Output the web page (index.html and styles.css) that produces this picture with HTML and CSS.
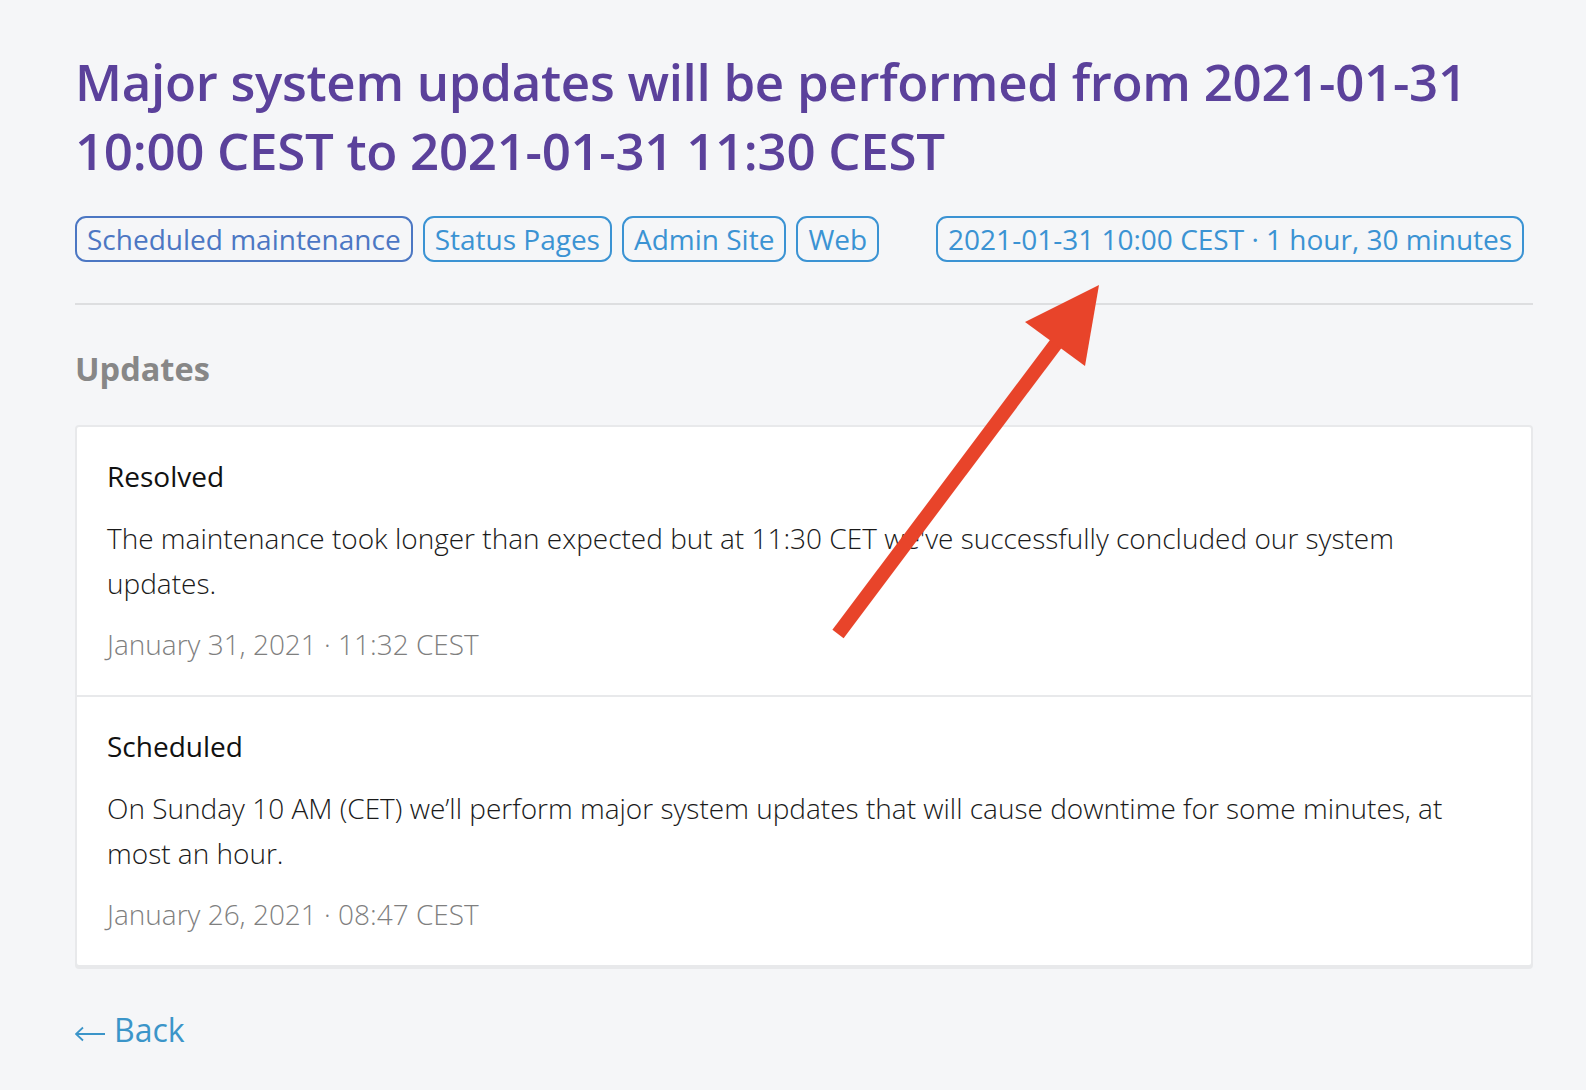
FILE: index.html
```html
<!DOCTYPE html>
<html lang="en">
<head>
    <meta charset="UTF-8">
    <meta name="viewport" content="width=device-width, initial-scale=1">
    <title>Major system updates</title>
    <link rel="stylesheet" href="styles.css">
</head>
<body>
<div class="page">
    <h1 class="title">Major system updates will be performed from 2021-01-31 10:00 CEST to 2021-01-31 11:30 CEST</h1>

    <div class="tags">
        <span class="tag tag-kind">Scheduled maintenance</span>
        <span class="tag">Status Pages</span>
        <span class="tag">Admin Site</span>
        <span class="tag">Web</span>
        <span class="tag tag-when">2021-01-31 10:00 CEST · 1 hour, 30 minutes</span>
    </div>

    <hr class="divider">

    <h2 class="section-title">Updates</h2>

    <div class="updates">
        <div class="update">
            <div class="update-status">Resolved</div>
            <p class="update-text">The maintenance took longer than expected but at 11:30 CET we've successfully concluded our system updates.</p>
            <div class="update-date">January 31, 2021 · 11:32 CEST</div>
        </div>
        <div class="update">
            <div class="update-status">Scheduled</div>
            <p class="update-text">On Sunday 10 AM (CET) we’ll perform major system updates that will cause downtime for some minutes, at most an hour.</p>
            <div class="update-date">January 26, 2021 · 08:47 CEST</div>
        </div>
    </div>

    <a class="back" href="#">
        <svg class="back-arrow" width="30" height="16" viewBox="0 0 30 16" fill="none" stroke="currentColor" stroke-width="1.8">
            <path d="M1 8H30M8 1.5L1 8l7 6.5"/>
        </svg>Back</a>
</div>

<!-- annotation arrow drawn over the page -->
<svg class="annotation" width="1586" height="1090" viewBox="0 0 1586 1090">
    <line x1="838" y1="634" x2="1058" y2="341" stroke="#e8442a" stroke-width="14"/>
    <polygon points="1099,285 1025,322 1085,366" fill="#e8442a"/>
</svg>
</body>
</html>
```

FILE: styles.css
```css
* {
    box-sizing: border-box;
    margin: 0;
    padding: 0;
}

body {
    background-color: #f5f6f8;
    font-family: 'Open Sans', 'Noto Sans', sans-serif;
    color: #222;
    position: relative;
}

.page {
    padding: 47px 53px 40px 75px;
}

.title {
    font-size: 51px;
    font-weight: 600;
    line-height: 69px;
    letter-spacing: -0.3px;
    color: #5b419b;
}

.tags {
    display: flex;
    align-items: center;
    gap: 10px;
    margin-top: 31px;
}

.tag {
    display: inline-block;
    padding: 2px 10px;
    border: 2px solid #3b93d3;
    border-radius: 11px;
    font-size: 28px;
    line-height: 38px;
    color: #3b93d3;
    white-space: nowrap;
}

.tag-kind {
    border-color: #4c77c3;
    color: #4c77c3;
}

.tag-when {
    margin-left: 47px;
}

.divider {
    border: none;
    border-top: 2px solid #dddee0;
    margin-top: 41px;
}

.section-title {
    font-size: 32.5px;
    font-weight: 700;
    line-height: 43px;
    color: #878787;
    margin-top: 42px;
}

.updates {
    margin-top: 35px;
    background-color: white;
    border: 2px solid #e8e9eb;
    border-radius: 4px;
    box-shadow: 0 2px 0 #e8e9eb;
}

.update {
    padding: 27px 30px 28px;
}

.update + .update {
    border-top: 2px solid #e8e9eb;
}

.update-status {
    font-size: 28px;
    line-height: 45px;
    color: #111;
}

.update-text {
    margin-top: 17px;
    font-size: 28px;
    font-weight: 300;
    line-height: 44.5px;
    color: #1a1a1a;
}

.update-date {
    margin-top: 17px;
    font-size: 28px;
    font-weight: 300;
    line-height: 45px;
    color: #7f7f7f;
}

.back {
    display: inline-block;
    margin-top: 37px;
    font-size: 32px;
    line-height: 51px;
    color: #3b95c9;
    text-decoration: none;
}

.back-arrow {
    vertical-align: 0;
    margin-right: 9px;
}

.annotation {
    position: absolute;
    left: 0;
    top: 0;
    pointer-events: none;
}
```
